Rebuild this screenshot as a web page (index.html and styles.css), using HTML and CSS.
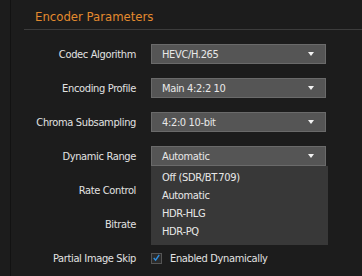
FILE: index.html
```html
<!DOCTYPE html>
<html lang="en">
<head>
  <meta charset="UTF-8" />
  <title>Encoder Parameters</title>
  <link rel="stylesheet" href="styles.css">
</head>
<body>
  <div class="page">
    <div class="panel">
      <h2 class="panel-title">Encoder Parameters</h2>
      <div class="form">
        <div class="row">
          <label>Codec Algorithm</label>
          <div class="select"><span>HEVC/H.265</span><i class="arrow"></i></div>
        </div>
        <div class="row">
          <label>Encoding Profile</label>
          <div class="select"><span>Main 4:2:2 10</span><i class="arrow"></i></div>
        </div>
        <div class="row">
          <label>Chroma Subsampling</label>
          <div class="select"><span>4:2:0 10-bit</span><i class="arrow"></i></div>
        </div>
        <div class="row">
          <label>Dynamic Range</label>
          <div class="select open">
            <span>Automatic</span><i class="arrow"></i>
            <!-- открытый список -->
            <ul class="menu">
              <li>Off (SDR/BT.709)</li>
              <li>Automatic</li>
              <li>HDR-HLG</li>
              <li>HDR-PQ</li>
            </ul>
          </div>
        </div>
        <div class="row">
          <label>Rate Control</label>
          <div class="select"></div>
        </div>
        <div class="row">
          <label>Bitrate</label>
          <div class="select"></div>
        </div>
        <div class="row">
          <label>Partial Image Skip</label>
          <div class="check">
            <span class="box">
              <svg viewBox="0 0 12 12"><path d="M2.3 6 L4.8 8.8 L9.6 2" fill="none" stroke="#2f8fe0" stroke-width="1.8"/></svg>
            </span>
            <span>Enabled Dynamically</span>
          </div>
        </div>
      </div>
    </div>
  </div>
</body>
</html>
```

FILE: styles.css
```css
* {
  box-sizing: border-box;
}
body {
  margin: 0;
  background: #1c1c1c;
  color: #e2e2e2;
  font-family: "DejaVu Sans", Tahoma, sans-serif;
  font-stretch: condensed;
  font-size: 11px;
  letter-spacing: -0.35px;
}
.page {
  margin-left: 10px;
  border-left: 1px solid #121212;
  min-height: 276px;
  padding-left: 13px;
}
.panel-title {
  margin: 0;
  height: 30px;
  padding: 9px 0 0 11px;
  font-size: 13px;
  line-height: 16px;
  font-weight: normal;
  letter-spacing: 0;
  color: #e38a2e;
  border-bottom: 1px solid #3c3c3c;
}
.form {
  padding-top: 7px;
}
.row {
  display: grid;
  grid-template-columns: 112px 175px;
  column-gap: 15px;
  align-items: center;
  height: 34px;
}
.row label {
  text-align: right;
}
.select {
  position: relative;
  height: 20px;
  display: flex;
  align-items: center;
  padding: 0 11px 0 10px;
  background: #555;
  border: 1px solid #6a6a6a;
  color: #e8e8e8;
}
.select span {
  flex: 1;
}
.arrow {
  width: 0;
  height: 0;
  border-left: 3px solid transparent;
  border-right: 3px solid transparent;
  border-top: 4px solid #f2f2f2;
}
.menu {
  position: absolute;
  top: 19px;
  left: -1px;
  width: 177px;
  margin: 0;
  padding: 3px 0 4px;
  list-style: none;
  background: #383838;
  z-index: 2;
}
.menu li {
  height: 18px;
  line-height: 18px;
  padding-left: 11px;
}
.check {
  display: flex;
  align-items: center;
  gap: 8px;
}
.check .box {
  width: 11px;
  height: 11px;
  border: 1px solid #555;
  background: #2a2a2a;
  display: flex;
}
.check svg {
  width: 12px;
  height: 12px;
  margin: -2px 0 0 0;
}
```
